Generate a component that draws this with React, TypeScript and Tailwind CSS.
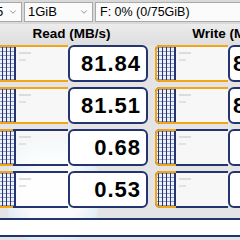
import { ChevronDown } from 'lucide-react'

type Row = { read: string; write: string; readFill: number; writeFill: number }

const rows: Row[] = [
  { read: '81.84', write: '81.47', readFill: 73, writeFill: 73 },
  { read: '81.51', write: '81.22', readFill: 73, writeFill: 73 },
  { read: '0.68', write: '0.71', readFill: 18, writeFill: 21 },
  { read: '0.53', write: '0.66', readFill: 18, writeFill: 21 },
]

function Cell({ value, fill, write }: { value: string; fill: number; write?: boolean }) {
  return (
    <div className="relative flex h-[37px] w-[153px] shrink-0">
      {/* graph-paper strip */}
      <div className="w-[21px] shrink-0 rounded-l-[5px] border-2 border-[#23346f] bg-[image:repeating-linear-gradient(90deg,transparent_0_1px,#23346f_1px_2px,transparent_2px_4px),repeating-linear-gradient(0deg,#8d98c4_0_1px,#eef0f8_1px_4px)]" />
      <div className="relative flex-1 border-y-2 border-[#23346f] bg-white/70">
        <div className="absolute left-[3px] top-[5px] h-[2px] w-[12px] bg-[#dcdcdc]" />
        <div className="absolute left-[3px] top-[12px] h-[2px] w-[7px] bg-[#e2e2e2]" />
      </div>
      <div
        className={
          write
            ? 'flex w-[80px] shrink-0 items-center justify-end rounded-[6px] border-2 border-[#23346f] bg-white pr-[13px] text-[22px] font-bold leading-none tracking-[1px] text-black'
            : 'flex w-[80px] shrink-0 items-center justify-end rounded-[6px] border-2 border-[#23346f] bg-white pr-[5px] text-[22px] font-bold leading-none tracking-[1px] text-black'
        }
      >
        {value}
      </div>
      {/* meter */}
      <div
        className="pointer-events-none absolute inset-y-0 left-0 rounded-l-[5px] border-y-2 border-l-2 border-[#f2a516]"
        style={{ width: fill }}
      />
    </div>
  )
}

export default function App() {
  return (
    <div className="relative h-[240px] w-[240px] overflow-hidden bg-[#e4e4e4] font-['Liberation_Sans',Arial,sans-serif] text-black">
      {/* drive / size selectors */}
      <div className="flex h-[24px] items-start gap-[2px] bg-[#d9d9d9] pt-[2px]">
        <div className="-ml-[20px] flex h-[20px] w-[42px] shrink-0 items-center justify-between border border-[#a9a9a9] bg-[#fbfbfb] pl-[15px] pr-[3px] text-[13px]">
          <span>5</span>
          <ChevronDown size={10} strokeWidth={1.5} className="text-[#555]" />
        </div>
        <div className="flex h-[20px] w-[69px] shrink-0 items-center justify-between border border-[#a9a9a9] bg-[#fbfbfb] pl-[3px] pr-[3px] text-[13px]">
          <span>1GiB</span>
          <ChevronDown size={10} strokeWidth={1.5} className="text-[#555]" />
        </div>
        <div className="flex h-[20px] w-[170px] shrink-0 items-center border border-[#a9a9a9] bg-[#fbfbfb] pl-[4px] text-[12.5px]">
          <span>F: 0% (0/75GiB)</span>
        </div>
      </div>

      {/* column headers */}
      <div className="-ml-[5px] flex h-[21px] gap-[7px] bg-[linear-gradient(#ececec,#dedede)]">
        <div className="flex w-[153px] shrink-0 items-center justify-center text-[13.5px] font-bold">Read (MB/s)</div>
        <div className="flex w-[153px] shrink-0 items-center justify-center text-[13.5px] font-bold">Write (MB/s)</div>
      </div>

      {/* results */}
      <div className="relative">
        <div className="absolute left-[8px] top-[88px] h-[120px] w-[90px] rounded-full bg-[radial-gradient(circle,#ffffff_40%,#dbeef8_70%,transparent_72%)] opacity-80" />
        <div className="relative -ml-[5px] flex flex-col gap-[5px]">
          {rows.map((r) => (
            <div key={r.read} className="flex gap-[7px]">
              <Cell value={r.read} fill={r.readFill} />
              <Cell value={r.write} fill={r.writeFill} write />
            </div>
          ))}
        </div>
        {/* comment box */}
        <div className="relative mt-[10px] h-[19px] border-y-2 border-[#23346f] bg-white" />
      </div>
    </div>
  )
}
